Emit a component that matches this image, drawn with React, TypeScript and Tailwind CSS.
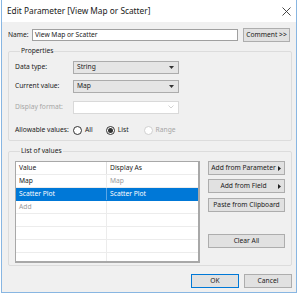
import React from 'react';

const FONT = { fontFamily: '"Noto Sans", "Open Sans", sans-serif' };

function Dropdown({ value, disabled }: { value?: string; disabled?: boolean }) {
  return (
    <div
      className={`flex items-center justify-between w-[106px] h-[13px] border pl-[3px] pr-[4px] ${
        disabled ? 'bg-white border-[#d9d9d9]' : 'bg-[#e5e5e5] border-[#acacac]'
      }`}
    >
      <span className="text-[6.7px] leading-none text-[#1a1a1a]">{value}</span>
      {disabled ? (
        <svg width="6" height="4" viewBox="0 0 6 4">
          <path d="M0.5 0.5 L3 3 L5.5 0.5" fill="none" stroke="#c8c8c8" strokeWidth="0.8" />
        </svg>
      ) : (
        <svg width="5" height="3" viewBox="0 0 5 3">
          <path d="M0 0 H5 L2.5 3 Z" fill="#333" />
        </svg>
      )}
    </div>
  );
}

function Radio({ checked, disabled, label }: { checked?: boolean; disabled?: boolean; label: string }) {
  return (
    <div className="flex items-center">
      <span
        className={`flex items-center justify-center w-[9px] h-[9px] rounded-full border bg-white ${
          disabled ? 'border-[#d0d0d0]' : 'border-[#333]'
        }`}
      >
        {checked && <span className="w-[5px] h-[5px] rounded-full bg-[#333]" />}
      </span>
      <span className={`ml-[3px] text-[6.7px] leading-none ${disabled ? 'text-[#a6a6a6]' : 'text-[#1a1a1a]'}`}>
        {label}
      </span>
    </div>
  );
}

function Btn({ children, arrow, className = '' }: { children: React.ReactNode; arrow?: boolean; className?: string }) {
  return (
    <div
      className={`flex items-center justify-center h-[14px] bg-[#e1e1e1] border border-[#adadad] text-[6.7px] leading-none text-[#1a1a1a] ${className}`}
    >
      <span className={arrow ? 'flex-1 text-center whitespace-nowrap' : 'whitespace-nowrap'}>{children}</span>
      {arrow && (
        <svg className="mr-[3px] shrink-0" width="3" height="5" viewBox="0 0 3 5">
          <path d="M0 0 L3 2.5 L0 5 Z" fill="#222" />
        </svg>
      )}
    </div>
  );
}

const ROWS: { value: string; display: string; kind: 'normal' | 'selected' | 'add' | 'empty' }[] = [
  { value: 'Map', display: 'Map', kind: 'normal' },
  { value: 'Scatter Plot', display: 'Scatter Plot', kind: 'selected' },
  { value: 'Add', display: '', kind: 'add' },
  { value: '', display: '', kind: 'empty' },
  { value: '', display: '', kind: 'empty' },
  { value: '', display: '', kind: 'empty' },
  { value: '', display: '', kind: 'empty' },
];

export default function App() {
  return (
    <div className="w-[300px] h-[295px] bg-white" style={FONT}>
      <div className="ml-[1px] w-[296px] h-[293px] border-x border-b border-[#88b6e2] flex flex-col">
        {/* Title bar */}
        <div className="h-[22px] bg-white flex items-center justify-between pl-[5px] pr-[5px]">
          <span className="text-[8.3px] leading-none text-[#1a1a1a]">Edit Parameter [View Map or Scatter]</span>
          <svg width="9" height="9" viewBox="0 0 9 9">
            <path d="M0.5 0.5 L8.5 8.5 M8.5 0.5 L0.5 8.5" stroke="#333" strokeWidth="0.9" />
          </svg>
        </div>

        {/* Body */}
        <div className="flex-1 bg-[#f0f0f0] flex flex-col">
          {/* Name row */}
          <div className="mt-[6px] h-[14px] flex items-center pl-[6px]">
            <span className="w-[24px] text-[6.7px] leading-none text-[#1a1a1a]">Name:</span>
            <div className="w-[206px] h-[12px] bg-white border border-[#a0a0a0] flex items-center pl-[2px]">
              <span className="text-[6.7px] leading-none text-[#1a1a1a]">View Map or Scatter</span>
            </div>
            <Btn className="ml-[5px] w-[47px]">Comment &gt;&gt;</Btn>
          </div>

          {/* Properties */}
          <fieldset className="ml-[6px] mt-[4px] w-[284px] border border-[#dcdcdc] rounded-[2px] pl-[6px] pt-[5px] pb-[4px] flex flex-col">
            <legend className="ml-[5px] px-[1px] text-[6.7px] leading-[10px] text-[#1a1a1a]">Properties</legend>
            <div className="flex items-center h-[13px]">
              <span className="w-[58px] text-[6.7px] leading-none text-[#1a1a1a]">Data type:</span>
              <Dropdown value="String" />
            </div>
            <div className="flex items-center h-[13px] mt-[6px]">
              <span className="w-[58px] text-[6.7px] leading-none text-[#1a1a1a]">Current value:</span>
              <Dropdown value="Map" />
            </div>
            <div className="flex items-center h-[12px] mt-[8px]">
              <span className="w-[58px] text-[6.7px] leading-none text-[#a6a6a6]">Display format:</span>
              <Dropdown disabled />
            </div>
            <div className="flex items-center h-[12px] mt-[11px]">
              <span className="w-[58px] text-[6.7px] leading-none text-[#1a1a1a]">Allowable values:</span>
              <Radio label="All" />
              <div className="ml-[13px]">
                <Radio label="List" checked />
              </div>
              <div className="ml-[15px]">
                <Radio label="Range" disabled />
              </div>
            </div>
          </fieldset>

          {/* List of values */}
          <fieldset className="ml-[6px] mt-[5px] w-[284px] border border-[#dcdcdc] rounded-[2px] pl-[6px] pt-[5px] pb-[2px] flex">
            <legend className="ml-[5px] px-[1px] text-[6.7px] leading-[10px] text-[#1a1a1a]">List of values</legend>
            <div className="w-[185px] h-[102px] bg-white border border-[#a8a8a8] border-b-2 border-r-2 overflow-hidden flex flex-col">
              <div className="flex h-[13px] border-b border-[#ececec] shrink-0">
                <div className="w-[91px] border-r border-[#e0e0e0] flex items-center pl-[3px] text-[6.7px] leading-none text-[#1a1a1a]">Value</div>
                <div className="flex-1 flex items-center pl-[3px] text-[6.7px] leading-none text-[#1a1a1a]">Display As</div>
              </div>
              {ROWS.map((r, i) => {
                const sel = r.kind === 'selected';
                return (
                  <div
                    key={i}
                    className={`flex h-[13px] shrink-0 border-b ${sel ? 'bg-[#0078d7] border-[#0078d7]' : 'border-[#ececec]'}`}
                  >
                    <div
                      className={`w-[91px] border-r flex items-center pl-[3px] text-[6.7px] leading-none ${
                        sel ? 'border-[#5aa6e6] text-white' : r.kind === 'add' ? 'border-[#ececec] text-[#9a9a9a]' : 'border-[#ececec] text-[#1a1a1a]'
                      }`}
                    >
                      {r.value}
                    </div>
                    <div
                      className={`flex-1 flex items-center pl-[3px] text-[6.7px] leading-none ${
                        sel ? 'text-white' : 'text-[#9a9a9a]'
                      }`}
                    >
                      {r.display}
                    </div>
                  </div>
                );
              })}
            </div>
            <div className="ml-[8px] w-[77px] flex flex-col">
              <Btn arrow>Add from Parameter</Btn>
              <Btn arrow className="mt-[4px]">Add from Field</Btn>
              <Btn className="mt-[5px]">Paste from Clipboard</Btn>
              <Btn className="mt-[22px]">Clear All</Btn>
            </div>
          </fieldset>

          {/* Footer */}
          <div className="mt-[8px] flex justify-end pr-[4px]">
            <div className="w-[48px] h-[14px] flex items-center justify-center bg-[#e1e1e1] border border-[#0078d7] text-[6.7px] leading-none text-[#1a1a1a]">OK</div>
            <div className="ml-[5px] w-[48px] h-[14px] flex items-center justify-center bg-[#e1e1e1] border border-[#adadad] text-[6.7px] leading-none text-[#1a1a1a]">Cancel</div>
          </div>
        </div>
      </div>
    </div>
  );
}
